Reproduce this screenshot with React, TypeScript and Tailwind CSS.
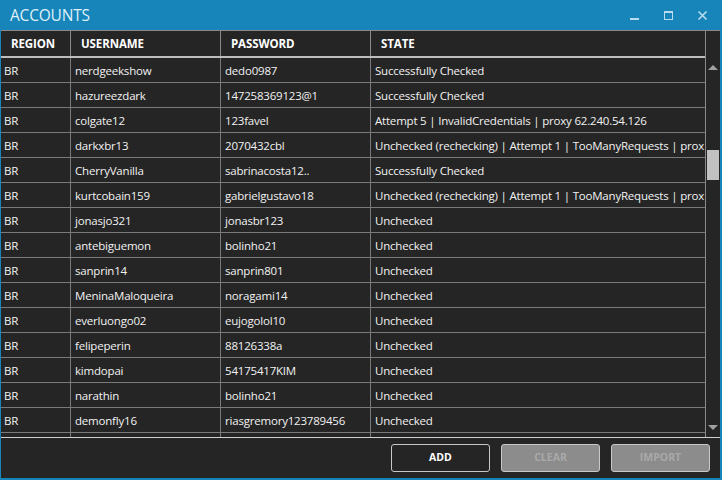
import React from "react";

const rows: [string, string, string, string][] = [
  ["BR", "nerdgeekshow", "dedo0987", "Successfully Checked"],
  ["BR", "hazureezdark", "147258369123@1", "Successfully Checked"],
  ["BR", "colgate12", "123favel", "Attempt 5 | InvalidCredentials | proxy 62.240.54.126"],
  ["BR", "darkxbr13", "2070432cbl", "Unchecked (rechecking) | Attempt 1 | TooManyRequests | prox"],
  ["BR", "CherryVanilla", "sabrinacosta12..", "Successfully Checked"],
  ["BR", "kurtcobain159", "gabrielgustavo18", "Unchecked (rechecking) | Attempt 1 | TooManyRequests | prox"],
  ["BR", "jonasjo321", "jonasbr123", "Unchecked"],
  ["BR", "antebiguemon", "bolinho21", "Unchecked"],
  ["BR", "sanprin14", "sanprin801", "Unchecked"],
  ["BR", "MeninaMaloqueira", "noragami14", "Unchecked"],
  ["BR", "everluongo02", "eujogolol10", "Unchecked"],
  ["BR", "felipeperin", "88126338a", "Unchecked"],
  ["BR", "kimdopai", "54175417KIM", "Unchecked"],
  ["BR", "narathin", "bolinho21", "Unchecked"],
  ["BR", "demonfly16", "riasgremory123789456", "Unchecked"],
  ["", "", "", ""],
];

const font = { fontFamily: '"Open Sans", "Noto Sans", sans-serif' };

export default function App() {
  return (
    <div
      className="w-[722px] h-[480px] bg-[#252525] flex flex-col border-l border-r-2 border-b-2 border-[#1785b9] overflow-hidden text-[#f2f2f2]"
      style={font}
    >
      {/* title bar */}
      <div className="h-[30px] shrink-0 bg-[#1785b9] flex items-center pl-[10px] pr-[14px] -ml-px -mr-[2px]">
        <div className="text-[15.5px] text-[#dff0fa] tracking-[-0.2px] leading-none pt-[1px]">ACCOUNTS</div>
        <div className="ml-auto flex items-center gap-[23px] text-[#cfe7f4]">
          <svg width="11" height="11" viewBox="0 0 11 11"><rect x="1" y="8" width="9" height="2" fill="#b9dcee" /></svg>
          <svg width="11" height="11" viewBox="0 0 11 11">
            <rect x="1.5" y="1.5" width="8" height="8" fill="none" stroke="#b9dcee" strokeWidth="1" />
            <rect x="1" y="1" width="9" height="2" fill="#b9dcee" />
          </svg>
          <svg width="11" height="11" viewBox="0 0 11 11">
            <path d="M1.5 1.5 L9.5 9.5 M9.5 1.5 L1.5 9.5" stroke="#b9dcee" strokeWidth="1.6" />
          </svg>
        </div>
      </div>

      {/* table area */}
      <div className="flex h-[407px] shrink-0 border-t border-[#8a8a8a]">
        <div className="w-[704px] flex flex-col">
          {/* header */}
          <div className="flex h-[25px] shrink-0 text-[11.5px] font-bold text-white tracking-[-0.1px]">
            <div className="w-[70px] border-r border-[#8a8a8a] pl-[10px] pt-[1px] flex items-center">REGION</div>
            <div className="w-[150px] border-r border-[#8a8a8a] pl-[10px] pt-[1px] flex items-center">USERNAME</div>
            <div className="w-[150px] border-r border-[#8a8a8a] pl-[10px] pt-[1px] flex items-center">PASSWORD</div>
            <div className="flex-1 pl-[10px] pt-[1px] flex items-center">STATE</div>
          </div>
          <div className="h-[2px] bg-[#bdbdbd] shrink-0" />
          <div className="flex-1 overflow-hidden">
            {rows.map((r, i) => (
              <div key={i} className="flex h-[25px] border-b border-[#7a7a7a] text-[11.5px] tracking-[-0.2px]">
                <div className="w-[70px] border-r border-[#7a7a7a] pl-[3px] pt-[2px] flex items-center whitespace-nowrap overflow-hidden">{r[0]}</div>
                <div className="w-[150px] border-r border-[#7a7a7a] pl-[4px] pt-[2px] flex items-center whitespace-nowrap overflow-hidden">{r[1]}</div>
                <div className="w-[150px] border-r border-[#7a7a7a] pl-[4px] pt-[2px] flex items-center whitespace-nowrap overflow-hidden">{r[2]}</div>
                <div className="flex-1 pl-[4px] pt-[2px] flex items-center whitespace-nowrap overflow-hidden">{r[3]}</div>
              </div>
            ))}
          </div>
        </div>
        {/* scrollbar */}
        <div className="w-[15px] border-l border-[#8a8a8a] flex flex-col items-center pt-[33px] pb-[6px]">
          <svg width="10" height="6" viewBox="0 0 10 6"><path d="M0 6 L5 1 L10 6 Z" fill="#a0a0a0" /></svg>
          <div className="mt-[80px] w-[12px] h-[30px] bg-[#c1c1c1]" />
          <div className="flex-1" />
          <svg width="10" height="6" viewBox="0 0 10 6"><path d="M0 0 L5 5 L10 0 Z" fill="#a0a0a0" /></svg>
        </div>
      </div>

      {/* bottom panel */}
      <div className="flex-1 border-t border-[#d0d0d0] flex items-start justify-end gap-[11px] pt-[6px] pr-[10px]">
        <button className="w-[99px] h-[28px] rounded-[3px] border border-[#c8c8c8] bg-[#252525] text-[10.5px] font-bold text-white">ADD</button>
        <button className="w-[99px] h-[28px] rounded-[3px] border border-[#c8c8c8] bg-[#8c8c8c] text-[10.5px] font-bold text-[#a9a9a9]">CLEAR</button>
        <button className="w-[99px] h-[28px] rounded-[3px] border border-[#c8c8c8] bg-[#8c8c8c] text-[10.5px] font-bold text-[#a9a9a9]">IMPORT</button>
      </div>
    </div>
  );
}
